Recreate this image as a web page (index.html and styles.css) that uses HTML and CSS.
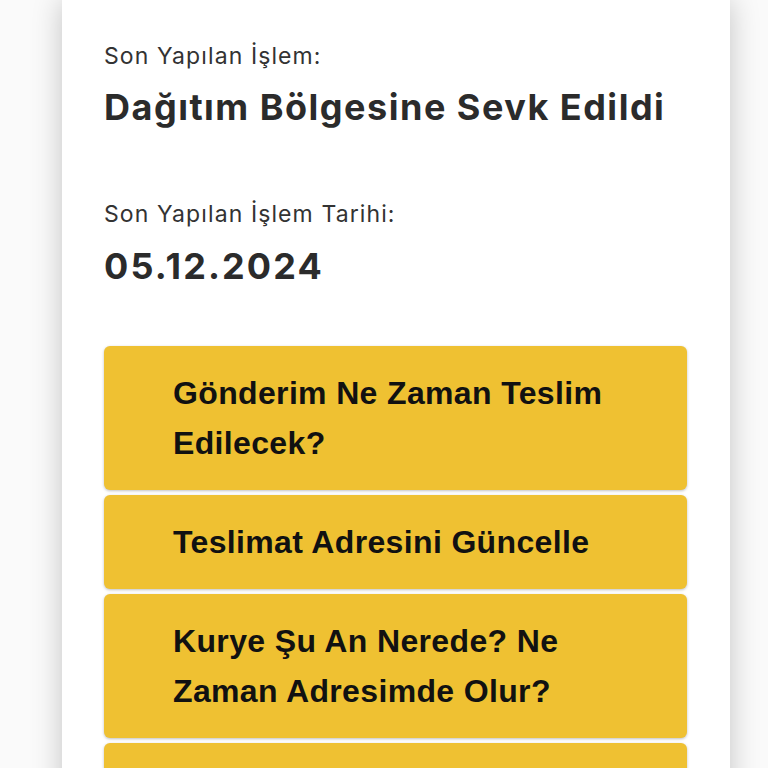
FILE: index.html
```html
<!DOCTYPE html>
<html lang="tr">
<head>
  <meta charset="UTF-8" />
  <meta name="viewport" content="width=device-width, initial-scale=1" />
  <title>Gönderi Takip</title>
  <link rel="stylesheet" href="styles.css">
</head>
<body>

<div class="kart">
  <div class="bilgi">
    <div class="etiket">Son Yapılan İşlem:</div>
    <div class="deger">Dağıtım Bölgesine Sevk Edildi</div>
  </div>
  <div class="bilgi bilgi-tarih">
    <div class="etiket">Son Yapılan İşlem Tarihi:</div>
    <div class="deger tarih">05.12.2024</div>
  </div>

  <div class="secenekler">
    <button class="btn-secenek">Gönderim Ne Zaman Teslim Edilecek?</button>
    <button class="btn-secenek">Teslimat Adresini Güncelle</button>
    <button class="btn-secenek">Kurye Şu An Nerede? Ne Zaman Adresimde Olur?</button>
    <button class="btn-secenek">Teslimat Zamanını Değiştir</button>
  </div>
</div>

</body>
</html>
```

FILE: styles.css
```css
* { box-sizing: border-box; margin: 0; padding: 0; }
body {
  font-family: Inter, 'Noto Sans', sans-serif;
  background: #fafafa;
  color: #2b2b2b;
  overflow: hidden;
}
.kart {
  width: 668px;
  margin-left: 62px;
  min-height: 900px;
  background: #fff;
  padding: 41px 43px 40px 42px;
  box-shadow: 0 0 28px rgba(0,0,0,0.22);
}
.etiket {
  font-size: 23px;
  line-height: 30px;
  letter-spacing: 1.1px;
  color: #333;
}
.deger {
  margin-top: 14px;
  font-size: 36px;
  line-height: 45px;
  letter-spacing: 1.5px;
  font-weight: 700;
  color: #2b2b2b;
}
.bilgi-tarih {
  margin-top: 69px;
}
.bilgi-tarih .deger {
  margin-top: 15px;
}
.deger.tarih {
  letter-spacing: 2.1px;
}
.secenekler {
  margin-top: 57px;
  display: flex;
  flex-direction: column;
  gap: 5px;
}
.btn-secenek {
  display: block;
  width: 100%;
  text-align: left;
  padding: 22px 69px;
  background: #efc132;
  border: none;
  border-radius: 6px;
  box-shadow: 0 1px 3px rgba(0,0,0,0.25);
  font-family: 'Liberation Sans', Arial, sans-serif;
  font-size: 32px;
  font-weight: 700;
  line-height: 50px;
  letter-spacing: 0.35px;
  color: #111;
  cursor: pointer;
}
```
